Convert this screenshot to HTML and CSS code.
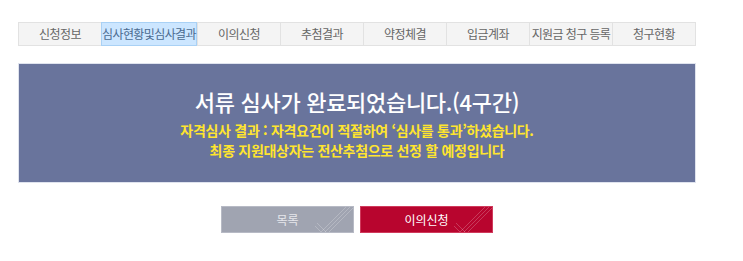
FILE: index.html
```html
<!DOCTYPE html>
<html lang="ko">
<head>
    <meta charset="UTF-8">
    <meta name="viewport" content="width=device-width, initial-scale=1.0">
    <title>심사현황및심사결과</title>
    <link rel="stylesheet" href="styles.css">
</head>
<body>
    <div class="wrap">
        <ul class="tabs">
            <li>신청정보</li>
            <li class="on">심사현황및심사결과</li>
            <li>이의신청</li>
            <li>추첨결과</li>
            <li>약정체결</li>
            <li>입금계좌</li>
            <li>지원금 청구 등록</li>
            <li>청구현황</li>
        </ul>
        <div class="result">
            <h2>서류 심사가 완료되었습니다.(4구간)</h2>
            <p>자격심사 결과 : 자격요건이 적절하여 ‘심사를 통과’하셨습니다.<br>최종 지원대상자는 전산추첨으로 선정 할 예정입니다</p>
        </div>
        <div class="btns">
            <button class="btn gray">목록
                <svg class="deco" width="40" height="27" viewBox="0 0 40 27"><path d="M8 27 L35 0 M12 27 L39 0 M16 27 L40 3 M2 21 L8 27 M4 18 L13 27" stroke="rgba(255,255,255,0.22)" stroke-width="1" fill="none"/></svg>
            </button>
            <button class="btn red">이의신청
                <svg class="deco" width="40" height="27" viewBox="0 0 40 27"><path d="M8 27 L35 0 M12 27 L39 0 M16 27 L40 3 M2 21 L8 27 M4 18 L13 27" stroke="rgba(255,255,255,0.22)" stroke-width="1" fill="none"/></svg>
            </button>
        </div>
    </div>
</body>
</html>
```
FILE: styles.css
```css
body {
    margin: 0;
    font-family: 'Noto Sans CJK KR', 'Noto Sans', sans-serif;
    background: #ffffff;
}
.wrap {
    width: 678px;
    margin: 0 0 0 18px;
    padding-top: 22px;
}
.tabs {
    display: flex;
    list-style: none;
    margin: 0;
    padding: 0;
    border: 1px solid #e2e2e2;
    background: #f4f4f4;
}
.tabs li {
    flex: 1;
    height: 22px;
    line-height: 22px;
    text-align: center;
    font-size: 12px;
    color: #666;
    border-left: 1px solid #e2e2e2;
    letter-spacing: -0.6px;
    white-space: nowrap;
}
.tabs li:first-child {
    border-left: none;
}
.tabs li.on {
    background: #cce6ff;
    color: #4a6a90;
    border: 1px solid #a9d1f5;
    margin: -1px 0;
}
.result {
    margin-top: 17px;
    height: 120px;
    background: #69749c;
    border: 1px solid #dfe3ee;
    box-sizing: border-box;
    text-align: center;
    padding-top: 23px;
}
.result h2 {
    margin: 0;
    color: #ffffff;
    font-size: 22px;
    font-weight: 500;
    line-height: 28px;
    letter-spacing: -0.3px;
}
.result p {
    margin: 5px 0 0;
    color: #ffe52e;
    font-size: 14px;
    font-weight: bold;
    line-height: 20px;
    letter-spacing: -0.3px;
}
.btns {
    display: flex;
    justify-content: center;
    gap: 6px;
    margin-top: 23px;
}
.btn {
    position: relative;
    width: 133px;
    height: 27px;
    border: 1px solid transparent;
    font-family: inherit;
    font-size: 12px;
    cursor: pointer;
    overflow: hidden;
    padding: 0;
}
.btn.gray {
    background: #a0a4b1;
    border-color: #b7bac5;
    color: #e6e7ec;
}
.btn.red {
    background: #b8052e;
    border-color: #d03a5c;
    color: #ffffff;
}
.deco {
    position: absolute;
    right: 0;
    bottom: 0;
}
```
